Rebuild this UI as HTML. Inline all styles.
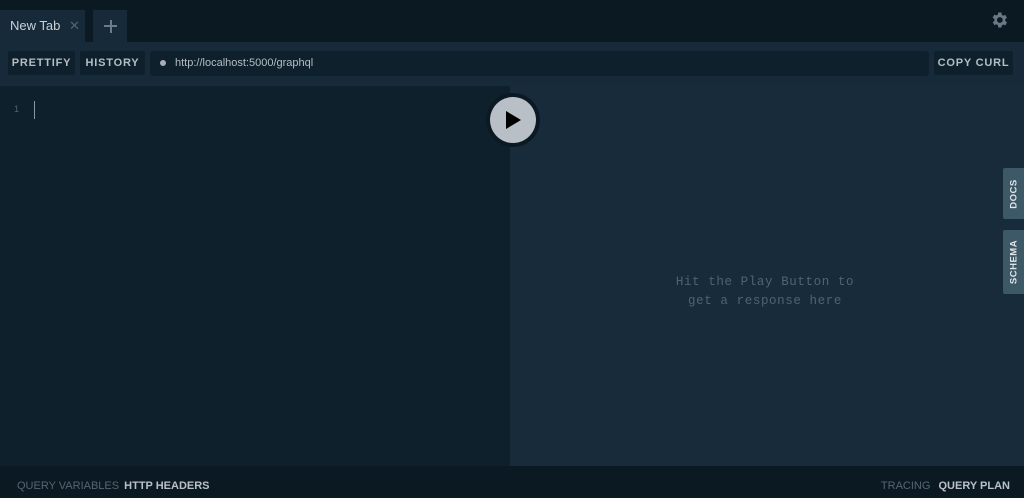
<!DOCTYPE html>
<html><head><style>
*{margin:0;padding:0;box-sizing:border-box}
body{width:1024px;height:498px;background:#0b1923;font-family:"Liberation Sans",sans-serif;position:relative;overflow:hidden}
.a{position:absolute}
.btn{position:absolute;top:51px;height:24px;background:#0f202d;color:#b5bdc3;font-size:11px;font-weight:bold;letter-spacing:.8px;line-height:24px;text-align:center;border-radius:2px}
.side{position:absolute;left:1003px;width:21px;background:#3d5866;border-radius:2px 0 0 2px;color:#dfe4e7;font-size:9.5px;font-weight:bold;letter-spacing:.5px}
.side span{position:absolute;left:50%;top:50%;transform:translate(-50%,-50%) rotate(-90deg);white-space:nowrap}
</style></head><body>
<div class="a" style="left:0;top:10px;width:85px;height:32px;background:#172a3a;color:#c9d0d5;font-size:13px;line-height:32px;padding-left:10px">New Tab <span style="color:#4f6370;margin-left:5px">✕</span></div>
<div class="a" style="left:93px;top:10px;width:34px;height:32px;background:#172a3a"></div>
<div class="a" style="left:104px;top:25px;width:13px;height:2px;background:#6a7d88"></div>
<div class="a" style="left:109.5px;top:19.5px;width:2px;height:13px;background:#6a7d88"></div>
<svg class="a" style="left:989px;top:10px" width="20" height="20" viewBox="0 0 24 24"><path fill="#6a7a84" d="M19.4 13a7.5 7.5 0 0 0 0-2l2.1-1.6-2-3.5-2.5 1a7.6 7.6 0 0 0-1.7-1L15 3h-4l-.4 2.6a7.6 7.6 0 0 0-1.7 1l-2.5-1-2 3.5L6.6 11a7.5 7.5 0 0 0 0 2l-2.1 1.6 2 3.5 2.5-1a7.6 7.6 0 0 0 1.7 1L11 21h4l.4-2.6a7.6 7.6 0 0 0 1.7-1l2.5 1 2-3.5zM13 15.5a3.5 3.5 0 1 1 0-7 3.5 3.5 0 0 1 0 7z"/></svg>
<div class="a" style="left:0;top:42px;width:1024px;height:44px;background:#172a3a"></div>
<div class="btn" style="left:8px;width:67px">PRETTIFY</div>
<div class="btn" style="left:80px;width:65px">HISTORY</div>
<div class="a" style="left:150px;top:51px;width:779px;height:25px;background:#0f202d;border-radius:3px;color:#b5bdc3;font-size:11px;line-height:25px;padding-left:25px">http://localhost:5000/graphql</div>
<div class="a" style="left:160px;top:60px;width:6px;height:6px;border-radius:50%;background:#a8b0b6"></div>
<div class="btn" style="left:934px;width:79px">COPY CURL</div>
<div class="a" style="left:0;top:86px;width:510px;height:380px;background:#0f202d"></div>
<div class="a" style="left:510px;top:86px;width:514px;height:380px;background:#172b3a"></div>
<div class="a" style="left:14px;top:104px;color:#4f6370;font-size:9px">1</div>
<div class="a" style="left:34px;top:101px;width:1px;height:18px;background:#8a979f"></div>
<div class="a" style="left:486px;top:93px;width:54px;height:54px;border-radius:50%;background:#0b1924"></div>
<div class="a" style="left:490px;top:97px;width:46px;height:46px;border-radius:50%;background:#b9bfc6"></div>
<svg class="a" style="left:506px;top:111px" width="16" height="18"><path d="M0 0L15 9L0 18z" fill="#000"/></svg>
<div class="a" style="left:640px;top:273px;width:250px;text-align:center;color:#4f6370;font-family:'Liberation Mono',monospace;font-size:12.5px;line-height:19px;letter-spacing:.6px">Hit the Play Button to<br>get a response here</div>
<div class="side" style="top:168px;height:51px"><span>DOCS</span></div>
<div class="side" style="top:230px;height:64px"><span>SCHEMA</span></div>
<div class="a" style="left:17px;top:480px;font-size:11px;color:#56656f;letter-spacing:0">QUERY VARIABLES <span style="color:#b9c1c6;margin-left:2px;font-weight:bold">HTTP HEADERS</span></div>
<div class="a" style="right:14px;top:480px;font-size:11px;color:#56656f;letter-spacing:0">TRACING <span style="color:#b9c1c6;margin-left:5px;font-weight:bold">QUERY PLAN</span></div>
</body></html>
